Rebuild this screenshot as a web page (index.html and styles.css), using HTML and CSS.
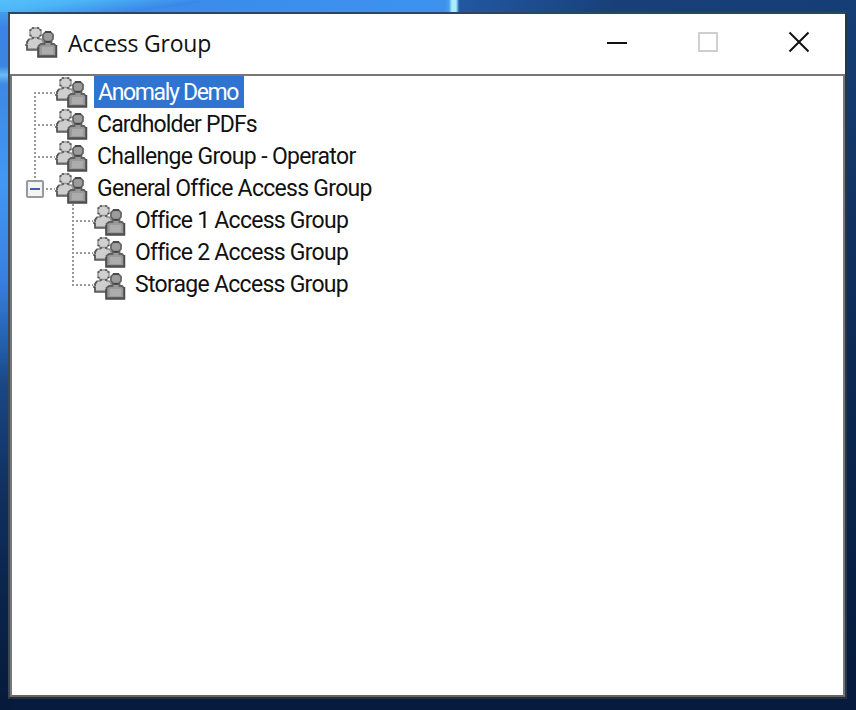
FILE: index.html
```html
<!DOCTYPE html>
<html lang="en">
<head>
<meta charset="utf-8">
<title>Access Group</title>
<link rel="stylesheet" href="styles.css">
</head>
<body>
<svg class="defs" width="0" height="0" aria-hidden="true">
  <symbol id="people" viewBox="0 0 33 32">
    <path d="M7 10H14V12H16L18 14V22H2V15L4.500 12H7Z" fill="#cecece" stroke="#8c8c8c" stroke-width="1.500"/>
    <path d="M4 12L2 15V17M0 18H2M2 18V23H13" fill="none" stroke="#555" stroke-width="1.600"/>
    <path d="M7.500 1H13.500L16 3.500V8L13.500 10.500H7.500L5 8V3.500Z" fill="#d0d0d0" stroke="#959595" stroke-width="1.500"/>
    <path d="M7 1H9M12 1H14M4.500 3H6.500M14.500 3H16.500M4.500 8.500H6.500M14.500 8.500H16.500M7 11H9M12 11H14" stroke="#505050" stroke-width="1.700"/>
    <path d="M19.500 14H26.500V17H29L31 19V29H13.500V19L16 17H19.500Z" fill="#999" stroke="#606060" stroke-width="1.800"/>
    <path d="M31.500 18V30H13V20" fill="none" stroke="#4b4b4b" stroke-width="1.500"/>
    <path d="M17 20H28V27H17Z" fill="#acacac"/>
    <path d="M20.500 5H25.500L28 7.500V12L25.500 14.500H20.500L18 12V7.500Z" fill="#9c9c9c" stroke="#606060" stroke-width="1.700"/>
    <path d="M20 5H26M20.500 15H25.500" stroke="#3a3a3a" stroke-width="1.700"/>
  </symbol>
</svg>
<main class="window">
  <header class="titlebar">
    <svg class="people"><use href="#people"/></svg>
    <h1 class="title">Access Group</h1>
    <div class="controls">
      <svg class="control" viewBox="0 0 22 22"><path d="M1 12H21" stroke="#111" stroke-width="2"/></svg>
      <svg class="control" viewBox="0 0 22 22"><path d="M2 2H20V20H2Z" fill="none" stroke="#cdcdcd" stroke-width="1.800"/></svg>
      <svg class="control" viewBox="0 0 22 22"><path d="M1.500 1.500L20.500 20.500M20.500 1.500L1.500 20.500" stroke="#111" stroke-width="2"/></svg>
    </div>
  </header>
  <section class="content">
    <ul class="tree">
      <li class="node"><div class="row"><svg class="people"><use href="#people"/></svg><span class="label selected t1">Anomaly Demo</span></div></li>
      <li class="node"><div class="row"><svg class="people"><use href="#people"/></svg><span class="label t2">Cardholder PDFs</span></div></li>
      <li class="node"><div class="row"><svg class="people"><use href="#people"/></svg><span class="label t3">Challenge Group - Operator</span></div></li>
      <li class="node last"><div class="row"><span class="toggle"></span><svg class="people"><use href="#people"/></svg><span class="label t4">General Office Access Group</span></div>
        <ul class="tree children">
          <li class="node"><div class="row"><svg class="people"><use href="#people"/></svg><span class="label t5">Office 1 Access Group</span></div></li>
          <li class="node"><div class="row"><svg class="people"><use href="#people"/></svg><span class="label t5">Office 2 Access Group</span></div></li>
          <li class="node last"><div class="row"><svg class="people"><use href="#people"/></svg><span class="label t6">Storage Access Group</span></div></li>
        </ul>
      </li>
    </ul>
  </section>
</main>
</body>
</html>
```

FILE: styles.css
```css
* { box-sizing: border-box; }
body {
  margin: 0;
  height: 710px;
  padding: 12px 9px 11px 8px;
  overflow: hidden;
  font-family: Roboto, "Liberation Sans", sans-serif;
  color: #111;
  background:
    linear-gradient(90deg, transparent 445px, #4aa0e8 449px, #a9edff 452px, #a9edff 456px, #2463ad 459px, transparent 460px) 0 0 / 100% 12px no-repeat,
    linear-gradient(172deg, #55c0fa 0, #4db5f7 12px, #3987e8 30px, transparent 31px) 0 0 / 200px 12px no-repeat,
    linear-gradient(90deg, #3a88e6 0, #3d92f0 452px, #2158a3 458px, #183f78 620px, #163e76 100%) 0 0 / 100% 12px no-repeat,
    linear-gradient(#4aaef5 0, #3b83e4 28px, #3b85e2 66px, #68bdf5 75px, #3d88e4 84px, #4298f5 180px, #387fe0 280px, #2767b8 330px, #194783 385px, #10305f 490px, #0a2449 600px, #061b3c 700px) 0 0 / 12px 100% no-repeat,
    linear-gradient(#163f77 0, #133667 150px, #0e2c58 320px, #092349 480px, #061b3d 700px);
}
.defs { position: absolute; }
.window {
  display: flex;
  flex-direction: column;
  height: 687px;
  border: 2px solid;
  border-color: #294663 #293645 #292e33 #3b4853;
  background: #fff;
}
.titlebar {
  display: flex;
  align-items: center;
  flex: 0 0 60px;
  padding: 0 0 2px 15px;
}
.people { flex: none; width: 33px; height: 32px; }
.title {
  margin: 0 0 0 10px;
  font: 400 23px/32px "Open Sans", "Noto Sans", sans-serif;
  letter-spacing: -0.2px;
}
.controls { display: flex; gap: 69px; margin: 0 0 2px auto; padding-right: 35px; }
.control { width: 22px; height: 22px; }
.content {
  flex: 1;
  border: 2px solid #777;
  border-bottom-color: #666;
}
.tree { margin: 0; padding: 0 0 0 43px; list-style: none; }
.children { padding: 0 0 0 38px; }
.node { position: relative; }
.node::before, .row::before {
  content: "";
  position: absolute;
  left: -21px;
}
.node::before {
  top: 0;
  width: 2px;
  height: 32px;
  background: repeating-linear-gradient(#999 0 2px, transparent 2px 4px);
}
.tree > .node:first-child::before { top: 16px; height: 16px; }
.children > .node:first-child::before { top: 0; height: 32px; }
.tree > .last::before { height: 17px; }
.row { display: flex; align-items: center; position: relative; height: 32px; }
.row .people { margin-top: 2px; }
.row::before {
  top: 16px;
  width: 21px;
  height: 2px;
  background: repeating-linear-gradient(90deg, #999 0 2px, transparent 2px 4px);
}
.label {
  height: 32px;
  margin-left: 6px;
  padding-left: 3px;
  font-size: 23px;
  line-height: 34px;
  white-space: nowrap;
}
.t1 { letter-spacing: -1.35px; }
.t2 { letter-spacing: -0.83px; }
.t3 { letter-spacing: -0.66px; }
.t4 { letter-spacing: -0.71px; }
.t5 { letter-spacing: -0.74px; }
.t6 { letter-spacing: -0.72px; }
.selected { width: 150px; padding-left: 4px; color: #fff; background: #3074d1; }
.toggle {
  position: absolute;
  left: -29px;
  top: 8px;
  width: 18px;
  height: 18px;
  border: 2px solid #999;
  border-radius: 2px;
  background: linear-gradient(#3c5eb4, #3c5eb4) center / 10px 2px no-repeat, #f4f4f4;
}
```
